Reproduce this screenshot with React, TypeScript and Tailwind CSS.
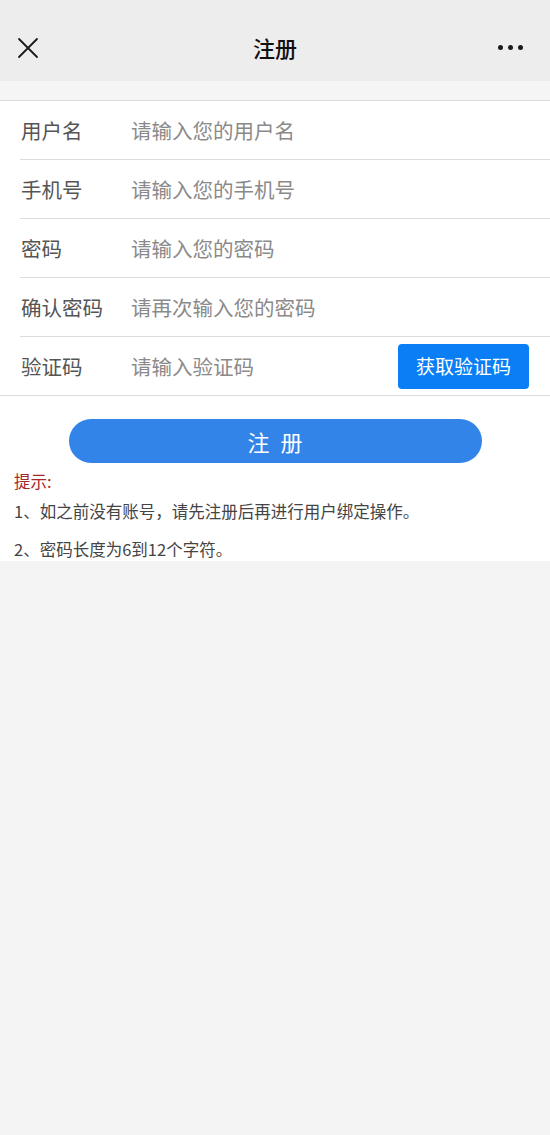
import React from "react";

const rows = [
  { label: "用户名", placeholder: "请输入您的用户名" },
  { label: "手机号", placeholder: "请输入您的手机号" },
  { label: "密码", placeholder: "请输入您的密码" },
  { label: "确认密码", placeholder: "请再次输入您的密码" },
];

const font = { fontFamily: '"Noto Sans CJK SC", "Noto Sans", sans-serif' };

export default function App() {
  return (
    <div className="min-h-[1135px] w-[550px] bg-[#f4f4f4]" style={font}>
      {/* top bar */}
      <div className="h-[81px] bg-[#ededed] grid grid-cols-[1fr_auto_1fr] items-center px-[17px] pt-[14px]">
        <svg width="22" height="22" viewBox="0 0 22 22" className="text-[#1a1a1a]">
          <path d="M2 2 L20 20 M20 2 L2 20" stroke="currentColor" strokeWidth="1.8" strokeLinecap="round" />
        </svg>
        <div className="text-[22px] font-medium text-[#111]">注册</div>
        <div className="flex justify-end gap-[5px] pr-[10px]">
          <span className="w-[5px] h-[5px] rounded-full bg-[#1a1a1a]" />
          <span className="w-[5px] h-[5px] rounded-full bg-[#1a1a1a]" />
          <span className="w-[5px] h-[5px] rounded-full bg-[#1a1a1a]" />
        </div>
      </div>
      <div className="h-[19px] bg-[#f5f5f5]" />

      <div className="bg-white border-t border-[#dcdcdc]">
        <div className="border-b border-[#dcdcdc]">
          {rows.map((r) => (
            <div key={r.label} className="pl-[20px]">
              <div className="h-[59px] flex items-center border-b border-[#dcdcdc] text-[20.5px]">
                <span className="w-[111px] pl-[1px] text-[#555]">{r.label}</span>
                <span className="text-[#8a8a8a]">{r.placeholder}</span>
              </div>
            </div>
          ))}
          <div className="h-[58px] flex items-center pl-[21px] pr-[21px] text-[20.5px]">
            <span className="w-[110px] text-[#555]">验证码</span>
            <span className="text-[#8a8a8a]">请输入验证码</span>
            <button className="ml-auto w-[131px] h-[45px] rounded-[4px] bg-[#0a7ff5] text-white text-[19px]">
              获取验证码
            </button>
          </div>
        </div>

        <div className="pt-[23px]">
          <button className="block mx-auto w-[413px] h-[44px] rounded-full bg-[#3384e8] text-white text-[22px] tracking-[3px] pl-[3px]">
            注 册
          </button>
          <div className="px-[14px] pt-[3px]">
            <div className="text-[16.5px] leading-[30px] text-[#a8282a]">提示:</div>
            <div className="text-[16.5px] leading-[30px] text-[#444]">1、如之前没有账号，请先注册后再进行用户绑定操作。</div>
            <div className="mt-[11px] text-[16.5px] leading-[24px] text-[#444]">2、密码长度为6到12个字符。</div>
          </div>
        </div>
      </div>
    </div>
  );
}
